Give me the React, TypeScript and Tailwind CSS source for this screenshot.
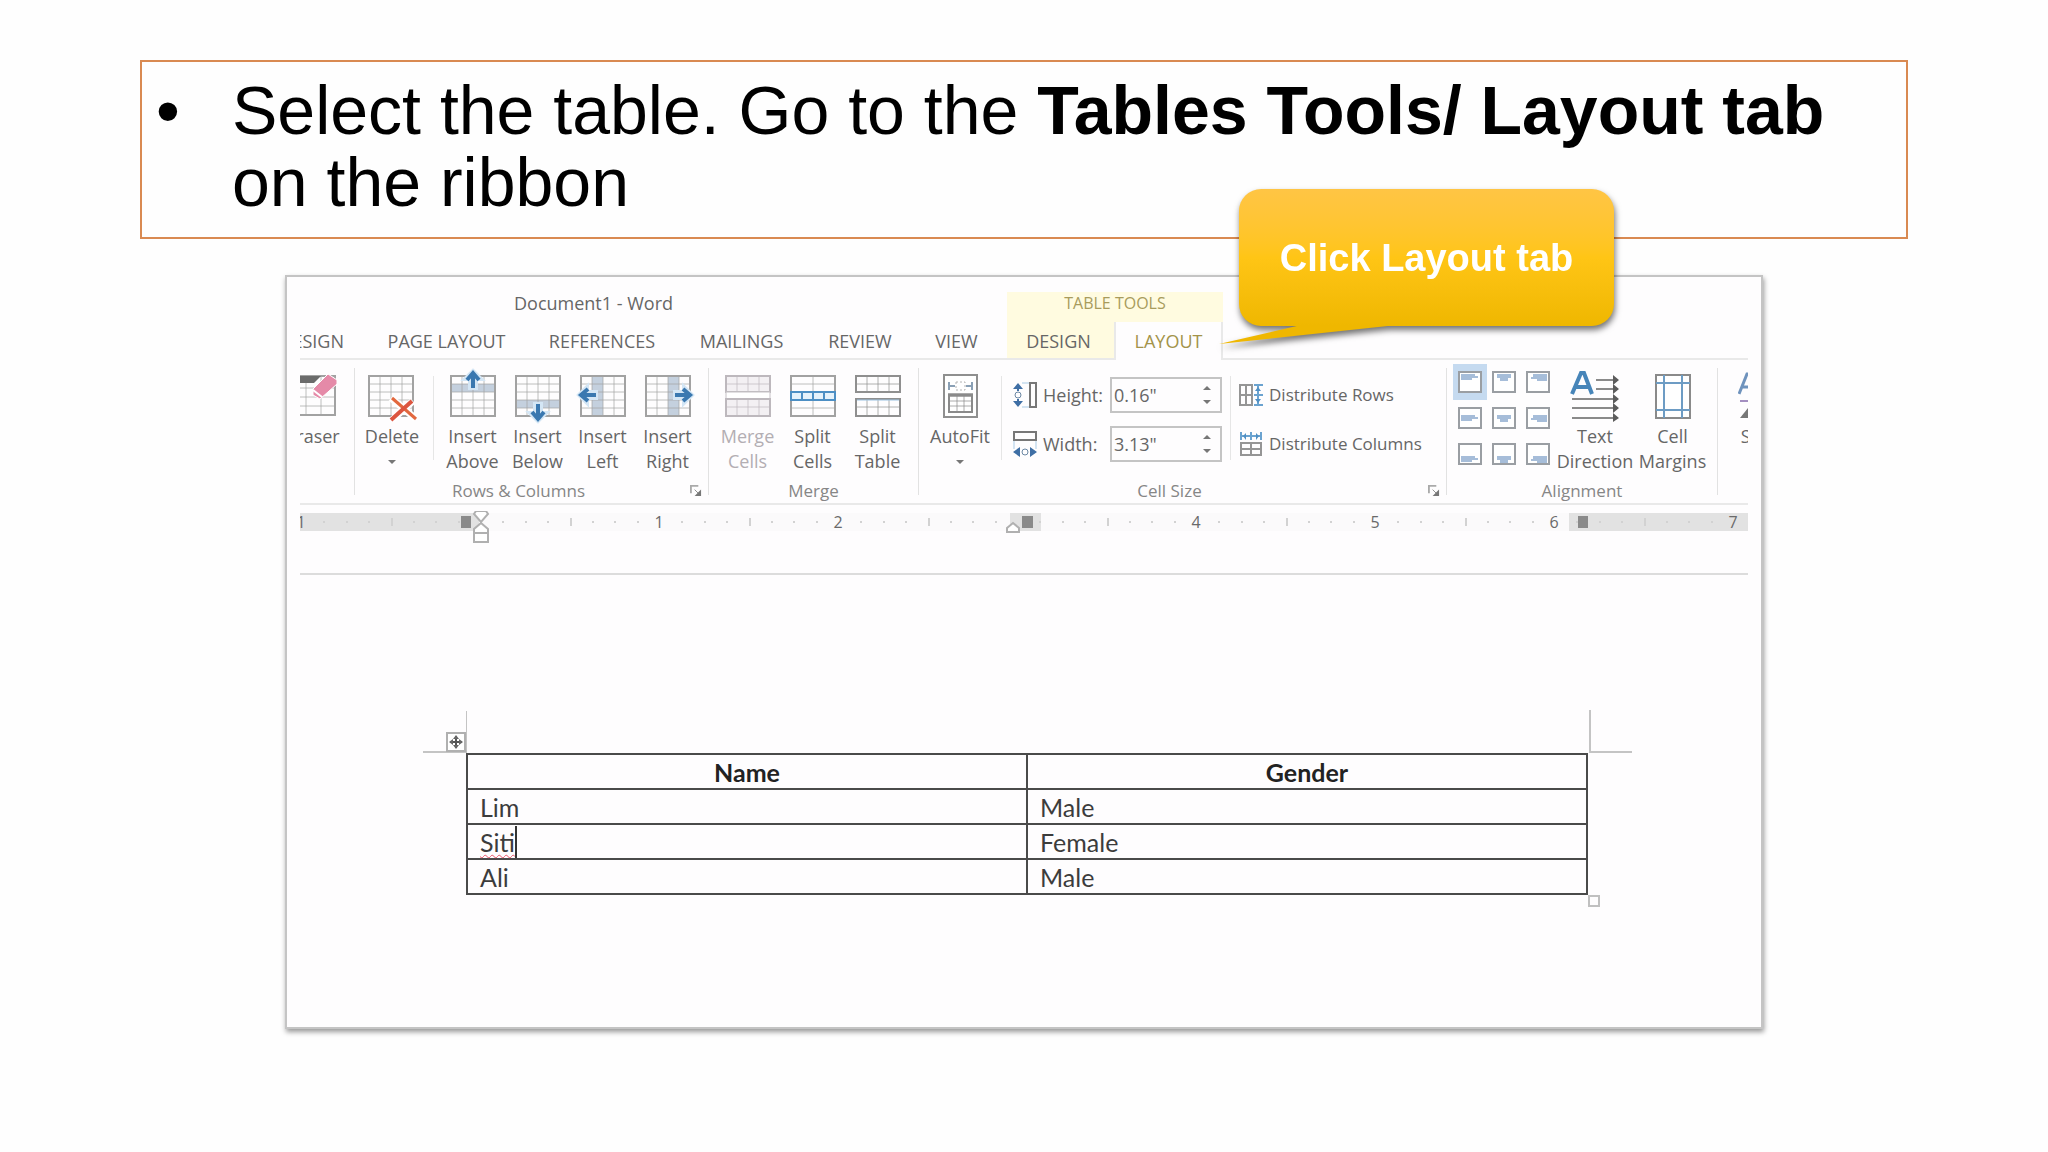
import { useState, type ReactNode } from 'react';
import clsx from 'clsx';

interface GridProps {
  columns: number[];
  rows: number[];
  color?: string;
}

// lines of a small table, drawn over a white sheet
function GridLines({ columns, rows, color = '#a2a2a2' }: GridProps) {
  const left = columns[0];
  const right = columns[columns.length - 1];
  const top = rows[0];
  const bottom = rows[rows.length - 1];
  return (
    <g stroke={color} fill="none">
      {columns.map((x) => (
        <path key={`c${x}`} d={`M${x} ${top}V${bottom}`} strokeOpacity={0.7} />
      ))}
      {rows.map((y) => (
        <path key={`r${y}`} d={`M${left} ${y}H${right}`} strokeOpacity={0.7} />
      ))}
      <rect x={left} y={top} width={right - left} height={bottom - top} strokeWidth={2} />
    </g>
  );
}

const COLS = [2, 13, 24, 35, 46];
const ROWS = [6, 14, 22, 30, 38, 46];
const ARROW = 'M0 -9L8 -1H3V8H-3V-1H-8Z';

function EraserIcon() {
  return (
    <svg width={48} height={52} viewBox="0 0 48 52">
      <GridLines columns={[2, 17, 32, 46]} rows={[6, 18, 27, 36, 45]} />
      <path d="M2 6H32L25 13H2Z" fill="#6b6b6b" />
      <path d="M24 19L39 4L48 10L48 14L31 29L24 25Z" fill="#e58aa8" stroke="#fff" />
      <path d="M24 20L33 27" stroke="#fff" strokeWidth={2} />
    </svg>
  );
}

function DeleteIcon() {
  return (
    <svg width={50} height={52} viewBox="0 0 50 52">
      <GridLines columns={COLS} rows={ROWS} />
      <path d="M24 28L49 49M46 31L25 50" stroke="#fff" strokeWidth={7} />
      <path d="M25 28L49 49" stroke="#e2683f" strokeWidth={3} />
      <path d="M45 31L24 50" stroke="#dc5540" strokeWidth={4} />
    </svg>
  );
}

type Side = 'above' | 'below' | 'left' | 'right';

const INSERT: Record<Side, { band: string; arrow: string }> = {
  above: { band: 'M2 14H46V22H2Z', arrow: 'translate(24 10)' },
  below: { band: 'M2 30H46V38H2Z', arrow: 'translate(24 42) rotate(180)' },
  left: { band: 'M13 6H24V46H13Z', arrow: 'translate(9 25) rotate(-90)' },
  right: { band: 'M24 6H35V46H24Z', arrow: 'translate(39 25) rotate(90)' },
};

function InsertIcon({ side }: { side: Side }) {
  const { band, arrow } = INSERT[side];
  return (
    <svg width={48} height={52} viewBox="0 0 48 52" overflow="visible">
      <path d={band} fill="#c4d0de" />
      <GridLines columns={COLS} rows={ROWS} />
      <g transform={arrow}>
        <path d={ARROW} fill="#d4e6f5" stroke="#d4e6f5" strokeWidth={4} />
        <path d="M0 8V-7M-6 0L0 -7L6 0" fill="none" stroke="#3a78b0" strokeWidth={4} />
      </g>
    </svg>
  );
}

function MergeCellsIcon() {
  return (
    <svg width={48} height={52} viewBox="0 0 48 52">
      <rect x={2} y={6} width={44} height={40} fill="#f3f0f3" />
      <GridLines columns={[2, 13, 24, 35, 46]} rows={[6, 14, 22]} color="#bdb8bd" />
      <rect x={2} y={22} width={44} height={7} fill="#fff" stroke="#c6c1c6" />
      <GridLines columns={[2, 13, 24, 35, 46]} rows={[29, 37, 46]} color="#bdb8bd" />
    </svg>
  );
}

function SplitCellsIcon() {
  return (
    <svg width={48} height={52} viewBox="0 0 48 52">
      <GridLines columns={[2, 24, 46]} rows={[6, 14, 22, 30, 38, 46]} />
      <rect x={2} y={22} width={44} height={8} fill="#e6f2fb" stroke="#4d8fc4" strokeWidth={2} />
      <path d="M24 22V30" stroke="#4d8fc4" strokeWidth={2} />
      <path d="M13 23V29M35 23V29" stroke="#4d8fc4" strokeWidth={2} />
    </svg>
  );
}

function SplitTableIcon() {
  return (
    <svg width={48} height={52} viewBox="0 0 48 52">
      <GridLines columns={COLS} rows={[6, 14, 22]} color="#8f8f8f" />
      <GridLines columns={COLS} rows={[29, 37, 46]} color="#8f8f8f" />
      <path d="M3 30H45" stroke="#9cc3e2" />
    </svg>
  );
}

function AutoFitIcon() {
  return (
    <svg width={48} height={52} viewBox="0 0 48 52">
      <rect x={8} y={5} width={33} height={42} fill="#fff" stroke="#8f8f8f" strokeWidth={2} />
      <path d="M13 12V20M36 12V20M14 16H19M30 16H35" stroke="#8aa0b5" strokeWidth={2} />
      <rect x={20} y={12} width={9} height={8} fill="none" stroke="#b4b4b4" strokeDasharray="2 2" />
      <path d="M12 25H37" stroke="#555" strokeWidth={3} />
      <GridLines columns={[13, 21, 28, 36]} rows={[25, 31, 36, 42]} color="#8a8a8a" />
    </svg>
  );
}

function TextDirectionIcon() {
  return (
    <svg width={50} height={52} viewBox="0 0 50 52">
      <path d="M2 24L11 3H14L22 24M5 17H19" fill="none" stroke="#4785b9" strokeWidth={4} />
      <path
        d="M26 10H45M26 19H45M2 29H45M2 38H45M2 48H45"
        stroke="#8a8a8a"
        strokeWidth={2}
      />
      <path
        d="M43 5L49 10L43 15ZM43 14L49 19L43 24ZM43 24L49 29L43 34ZM43 33L49 38L43 43ZM43 43L49 48L43 52Z"
        fill="#5c5c5c"
      />
    </svg>
  );
}

function CellMarginsIcon() {
  return (
    <svg width={48} height={52} viewBox="0 0 48 52">
      <rect x={7} y={5} width={34} height={43} fill="#fff" stroke="#8a8a8a" strokeWidth={2} />
      <path d="M7 13H41M7 40H41M15 5V48M33 5V48" stroke="#6d9cc4" strokeWidth={2} />
    </svg>
  );
}

function SortIcon() {
  return (
    <svg width={40} height={52} viewBox="0 0 40 52" className="shrink-0">
      <path d="M1 24L9 4H12L20 24M4 17H17" fill="none" stroke="#6f93bd" strokeWidth={3} />
      <path d="M2 31H20" stroke="#a48fc0" strokeWidth={2} />
      <path d="M2 48L10 38V48Z" fill="#777" />
    </svg>
  );
}

function HeightIcon() {
  return (
    <svg width={24} height={26} viewBox="0 0 24 26">
      <path d="M9 1H16M9 25H16" stroke="#a9cbe6" />
      <path d="M5 5V9M5 17V21" stroke="#3f6fa5" strokeWidth={2} />
      <path d="M0 7L5 1L10 7ZM0 19L5 25L10 19Z" fill="#3f6fa5" />
      <circle cx={5} cy={13} r={3} fill="none" stroke="#6b87a3" />
      <rect x={17} y={1} width={6} height={24} fill="none" stroke="#777" strokeWidth={2} />
    </svg>
  );
}

function WidthIcon() {
  return (
    <svg width={24} height={26} viewBox="0 0 24 26">
      <rect x={1} y={1} width={22} height={8} fill="none" stroke="#777" strokeWidth={2} />
      <path d="M1 10V18M23 10V18" stroke="#a9cbe6" />
      <path d="M7 16L0 21L7 26ZM17 16L24 21L17 26Z" fill="#3f6fa5" />
      <circle cx={12} cy={21} r={3} fill="none" stroke="#6b87a3" />
    </svg>
  );
}

function DistributeRowsIcon() {
  return (
    <svg width={24} height={24} viewBox="0 0 24 24">
      <path d="M1 2H13V22H1ZM1 12H13M7 2V22" fill="none" stroke="#959595" strokeWidth={2} />
      <path d="M15 2H24M15 12H24M15 22H24M19 2V22" stroke="#6ba3d0" strokeWidth={2} />
      <path d="M16 8L19 4L22 8ZM16 16L19 20L22 16Z" fill="#4f8fc4" />
    </svg>
  );
}

function DistributeColumnsIcon() {
  return (
    <svg width={24} height={24} viewBox="0 0 24 24">
      <path d="M2 11H22V23H2ZM2 17H22M12 11V23" fill="none" stroke="#959595" strokeWidth={2} />
      <path d="M2 0V8M12 0V8M22 0V8M2 4H22" stroke="#6ba3d0" strokeWidth={2} />
      <path d="M7 1L4 4L7 8ZM17 1L20 4L17 8Z" fill="#4f8fc4" />
    </svg>
  );
}

const ALIGN_SHAPES = [
  'M3 0H17V2H20V4H14V6H3Z',
  'M5 0H19V4H16V7H8V4H5Z',
  'M7 0H21V7H11V5H5V3H7Z',
];

function AlignIcon({ column, row }: { column: number; row: number }) {
  return (
    <svg width={24} height={22} viewBox="0 0 24 22">
      <rect x={1} y={1} width={22} height={20} fill="#fff" stroke="#9a9ea3" strokeWidth={2} />
      <path
        d={ALIGN_SHAPES[column]}
        transform={`translate(0 ${3 + row * 5})`}
        fill="#a6bdd9"
      />
    </svg>
  );
}

function Caret() {
  return (
    <svg width={10} height={6} viewBox="0 0 10 6">
      <path d="M1 1H9L5 5Z" fill="#777" />
    </svg>
  );
}

function Launcher() {
  return (
    <button type="button" aria-label="More options" className="mr-1.5 w-3">
      <svg width={12} height={12} viewBox="0 0 13 13">
        <path d="M1 9V1H9" fill="none" stroke="#aaa" strokeWidth={2} />
        <path d="M5 5L10 10" stroke="#888" />
        <path d="M12 5V12H5Z" fill="#777" />
      </svg>
    </button>
  );
}

interface RibbonButtonProps {
  icon: ReactNode;
  lines: string[];
  width?: string;
  caret?: boolean;
  disabled?: boolean;
}

function RibbonButton({ icon, lines, width = 'w-[65px]', caret, disabled }: RibbonButtonProps) {
  return (
    <button
      type="button"
      disabled={disabled}
      className={clsx(
        'flex shrink-0 flex-col items-center whitespace-nowrap pt-2 leading-[25px]',
        width,
        disabled && 'text-[#b3aeb3]'
      )}
    >
      <span className="flex h-14 items-center">{icon}</span>
      {lines.map((line) => (
        <span key={line}>{line}</span>
      ))}
      {caret && (
        <span className="flex h-[25px] items-center">
          <Caret />
        </span>
      )}
    </button>
  );
}

interface GroupProps {
  children: ReactNode;
  label?: string;
  width: string;
  launcher?: boolean;
}

function Group({ children, label, width, launcher }: GroupProps) {
  return (
    <div className={clsx('my-2 flex flex-col border-r border-[#e2e2e2]', width)}>
      <div className="-mt-2 flex h-[119px] shrink-0">{children}</div>
      <div className="flex h-6 shrink-0 items-center text-[17px] text-[#868686]">
        <span className={clsx('flex-1 text-center', launcher && 'pr-2')}>{label}</span>
        {launcher && <Launcher />}
      </div>
    </div>
  );
}

function Divider() {
  return <div className="mt-4 h-[84px] w-px shrink-0 bg-[#e6e6e6]" />;
}

interface SizeFieldProps {
  id: string;
  icon: ReactNode;
  label: string;
  initial: string;
}

function SizeField({ id, icon, label, initial }: SizeFieldProps) {
  const [value, setValue] = useState(initial);
  return (
    <div className="flex h-9 items-center">
      {icon}
      <label htmlFor={id} className="w-[67px] shrink-0 pl-1.5">
        {label}
      </label>
      <div className="ml-1.5 flex h-9 w-28 items-center border-2 border-[#c4c4c4] pr-2">
        <input
          id={id}
          value={value}
          onChange={(e) => setValue(e.target.value)}
          className="w-full min-w-0 bg-transparent pl-0.5 outline-none"
        />
        <svg width={10} height={20} viewBox="0 0 10 20" className="shrink-0">
          <path d="M1 5L5 1L9 5ZM1 15L5 19L9 15Z" fill="#777" />
        </svg>
      </div>
    </div>
  );
}

const TABS = [
  { name: 'PAGE LAYOUT', width: 'w-[161px]' },
  { name: 'REFERENCES', width: 'w-[150px]' },
  { name: 'MAILINGS', width: 'w-[129px]' },
  { name: 'REVIEW', width: 'w-[108px]' },
  { name: 'VIEW', width: 'w-[93px] pr-2' },
];

function RibbonTabs() {
  return (
    <>
      <div className="flex h-[30px] items-center">
        <div className="w-[707px] shrink-0 pb-2 pl-[214px]">Document1 - Word</div>
        <div className="flex h-full w-[216px] shrink-0 items-center justify-center bg-[#fffbe0] pb-2 text-base text-[#a89b5c]">
          TABLE TOOLS
        </div>
      </div>
      <nav className="flex h-[38px] leading-[38px]">
        <button
          type="button"
          className="flex w-[66px] shrink-0 justify-end overflow-hidden border-b-2 border-[#e9e9e9] pr-[22px]"
        >
          DESIGN
        </button>
        {TABS.map((tab) => (
          <button
            key={tab.name}
            type="button"
            className={clsx('shrink-0 border-b-2 border-[#e9e9e9]', tab.width)}
          >
            {tab.name}
          </button>
        ))}
        <button
          type="button"
          className="w-[107px] shrink-0 border-b-2 border-[#e9e9e9] bg-[#fffbe0] pr-1"
        >
          DESIGN
        </button>
        <button
          type="button"
          className="w-[109px] shrink-0 border-x-2 border-[#e9e9e9] text-[#a3934a]"
        >
          LAYOUT
        </button>
        <div className="flex-1 border-b-2 border-[#e9e9e9]" />
      </nav>
    </>
  );
}

const ALIGNMENTS = ['Top', 'Middle', 'Bottom'].flatMap((v, row) =>
  ['left', 'center', 'right'].map((h, column) => ({ name: `${v} ${h}`, row, column }))
);

function Ribbon() {
  const [align, setAlign] = useState('Top left');
  return (
    <div className="flex h-[145px] overflow-hidden border-b-2 border-[#e9e9e9]">
      <div className="my-2 flex w-[55px] shrink-0 justify-end overflow-hidden border-r border-[#e2e2e2] pr-[17px]">
        <div className="-mt-2 flex">
          <RibbonButton icon={<EraserIcon />} lines={['Eraser']} width="w-12" />
        </div>
      </div>
      <Group label="Rows & Columns" width="w-[354px] shrink-0" launcher>
        <RibbonButton icon={<DeleteIcon />} lines={['Delete']} width="w-[74px] mr-1" caret />
        <Divider />
        <div className="flex pl-1.5">
          <RibbonButton icon={<InsertIcon side="above" />} lines={['Insert', 'Above']} />
          <RibbonButton icon={<InsertIcon side="below" />} lines={['Insert', 'Below']} />
          <RibbonButton icon={<InsertIcon side="left" />} lines={['Insert', 'Left']} />
          <RibbonButton icon={<InsertIcon side="right" />} lines={['Insert', 'Right']} />
        </div>
      </Group>
      <Group label="Merge" width="w-[210px] shrink-0">
        <div className="flex px-1.5">
          <RibbonButton icon={<MergeCellsIcon />} lines={['Merge', 'Cells']} disabled />
          <RibbonButton icon={<SplitCellsIcon />} lines={['Split', 'Cells']} />
          <RibbonButton icon={<SplitTableIcon />} lines={['Split', 'Table']} />
        </div>
      </Group>
      <Group label="Cell Size" width="w-[528px] shrink-0" launcher>
        <RibbonButton icon={<AutoFitIcon />} lines={['AutoFit']} width="w-[82px]" caret />
        <Divider />
        <div className="flex flex-col gap-[13px] pt-[17px] pr-2 pl-[11px]">
          <SizeField id="height" icon={<HeightIcon />} label="Height:" initial={'0.16"'} />
          <SizeField id="width" icon={<WidthIcon />} label="Width:" initial={'3.13"'} />
        </div>
        <Divider />
        <div className="flex flex-col gap-[13px] pt-[17px] pl-2 text-[17px]">
          <button type="button" className="flex h-9 items-center gap-1.5">
            <DistributeRowsIcon />
            Distribute Rows
          </button>
          <button type="button" className="flex h-9 items-center gap-1.5">
            <DistributeColumnsIcon />
            Distribute Columns
          </button>
        </div>
      </Group>
      <Group label="Alignment" width="w-[271px] shrink-0">
        <div className="grid h-[112px] w-[108px] shrink-0 grid-cols-3 content-start pt-1 pl-1.5">
          {ALIGNMENTS.map(({ name, row, column }) => (
            <button
              key={name}
              type="button"
              aria-label={name}
              onClick={() => setAlign(name)}
              className={clsx(
                'flex h-9 items-center justify-center',
                align === name && 'bg-[#c5daf0]'
              )}
            >
              <AlignIcon column={column} row={row} />
            </button>
          ))}
        </div>
        <RibbonButton
          icon={<TextDirectionIcon />}
          lines={['Text', 'Direction']}
          width="w-20"
        />
        <RibbonButton icon={<CellMarginsIcon />} lines={['Cell', 'Margins']} width="w-[75px]" />
      </Group>
      <div className="flex min-w-0 flex-1 overflow-hidden pl-5">
        <RibbonButton icon={<SortIcon />} lines={['Sort']} width="w-10" />
      </div>
    </div>
  );
}

const INCH = 179;
const ZERO = 180;

// eighth-inch marks, from one inch left of the margin
const MARKS = Array.from({ length: 66 }, (_, i) => i - 8);

function Ruler() {
  return (
    <svg height={36} className="mt-1.5 w-full" role="img" aria-label="Ruler">
      <rect x={0} y={2} width="100%" height={18} fill="#fbfafb" />
      <rect x={0} y={2} width={179} height={18} fill="#e2e2e2" />
      <rect x={710} y={2} width={31} height={18} fill="#e2e2e2" />
      <rect x={1269} y={2} width="100%" height={18} fill="#e2e2e2" />
      {MARKS.map((m) => {
        const x = Math.round(ZERO + (m * INCH) / 8);
        const inch = Math.abs(m / 8);
        if (m === 0 || inch === 3) return null;
        if (Number.isInteger(inch)) {
          return (
            <text key={m} x={x} y={17} textAnchor="middle" fontSize={16} fill="#6a6a6a">
              {inch}
            </text>
          );
        }
        const tick = m % 4 === 0;
        return (
          <rect
            key={m}
            x={x}
            y={tick ? 7 : 10}
            width={2}
            height={tick ? 8 : 2}
            fill="#d2d2d2"
          />
        );
      })}
      <g fill="#8a8a8a">
        <rect x={161} y={5} width={10} height={12} />
        <rect x={722} y={5} width={11} height={12} />
        <rect x={1278} y={5} width={10} height={12} />
      </g>
      <g fill="#fff" stroke="#b0b0b0" strokeWidth={2}>
        <path d="M176 0H186L188 3L181 11L174 3Z" />
        <path d="M181 12L188 18V22H174V18Z" />
        <rect x={174} y={22} width={14} height={9} />
        <path d="M713 12L719 17V21H707V17Z" />
      </g>
    </svg>
  );
}

const PEOPLE = [
  { name: 'Lim', gender: 'Male' },
  { name: 'Siti', gender: 'Female', editing: true },
  { name: 'Ali', gender: 'Male' },
];

function PeopleTable() {
  return (
    <div className="relative mt-[178px] mr-40 ml-[166px]">
      <svg
        width={44}
        height={44}
        viewBox="0 0 44 44"
        className="absolute -top-[42px] -left-[43px]"
      >
        <path d="M44 0V42M0 41H44" stroke="#c4c4c4" strokeWidth={2} />
        <rect x={24} y={22} width={18} height={18} fill="#fff" stroke="#b0b0b0" strokeWidth={2} />
        <path d="M33 25V37M27 31H39" stroke="#555" strokeWidth={2} />
        <path
          d="M30 28L33 24L36 28ZM30 34L33 38L36 34ZM30 28L26 31L30 34ZM36 28L40 31L36 34Z"
          fill="#666"
        />
      </svg>
      <svg
        width={44}
        height={44}
        viewBox="0 0 44 44"
        className="absolute -top-[43px] -right-[44px]"
      >
        <path d="M2 0V43M1 42H44" stroke="#c4c4c4" strokeWidth={2} />
      </svg>
      <table className="w-full table-fixed border-collapse border-2 border-[#4a4a4a] font-[Lato,sans-serif] text-[25px] leading-8 text-[#3c3c3c]">
        <thead>
          <tr className="h-[35px]">
            <th className="border-2 border-[#4a4a4a] p-0 font-bold text-[#222]">Name</th>
            <th className="border-2 border-[#4a4a4a] p-0 font-bold text-[#222]">Gender</th>
          </tr>
        </thead>
        <tbody>
          {PEOPLE.map((person) => (
            <tr key={person.name} className="h-[35px]">
              <td className="border-2 border-[#4a4a4a] py-0 pr-0 pl-3">
                {person.editing ? (
                  <span className="inline-block border-r-2 border-[#333] align-top leading-8">
                    <span className="underline decoration-[#e8566a] decoration-wavy decoration-1 underline-offset-2">
                      {person.name}
                    </span>
                  </span>
                ) : (
                  person.name
                )}
              </td>
              <td className="border-2 border-[#4a4a4a] py-0 pr-0 pl-3">{person.gender}</td>
            </tr>
          ))}
        </tbody>
      </table>
      <div className="absolute top-full left-full h-3 w-3 border-2 border-[#c0c0c0]" />
    </div>
  );
}

function Callout() {
  return (
    <div className="absolute -top-[88px] left-[952px] w-[375px] drop-shadow-[1px_4px_3px_rgba(0,0,0,0.55)]">
      <div className="flex h-[137px] items-center justify-center rounded-[22px] bg-linear-to-b from-[#ffc544] via-[#ffc515] to-[#efb700] text-[38px] leading-[44px] font-bold text-white">
        Click Layout tab
      </div>
      <svg
        width={180}
        height={20}
        viewBox="0 0 180 20"
        className="absolute top-[136px] -left-5"
      >
        <path d="M82 0H178L0 19Z" fill="#efb700" />
      </svg>
    </div>
  );
}

export default function App() {
  return (
    <main className="min-h-screen bg-[#fefefe] pt-[60px] pb-20 font-['Liberation_Sans',Arial,sans-serif]">
      <div className="mx-[140px] border-2 border-[#d98a52] px-3.5 pt-3 pb-[19px]">
        <ul>
          <li className="flex text-[68px] leading-[72px] text-black">
            <span className="w-[76px] shrink-0">•</span>
            <p>
              Select the table. Go to the <b>Tables Tools/ Layout tab</b> on the ribbon
            </p>
          </li>
        </ul>
      </div>
      <section className="relative mx-[285px] mt-9 border-2 border-[#c4c4c4] bg-[#fefdfe] px-[13px] pt-[15px] pb-[132px] shadow-[1px_3px_5px_rgba(0,0,0,0.4)]">
        <div className="overflow-hidden font-['Open_Sans',sans-serif] text-[18px] text-[#666]">
          <RibbonTabs />
          <Ribbon />
          <Ruler />
          <div className="mt-[26px] h-0.5 bg-[#dcdcdc]" />
        </div>
        <PeopleTable />
        <Callout />
      </section>
    </main>
  );
}
